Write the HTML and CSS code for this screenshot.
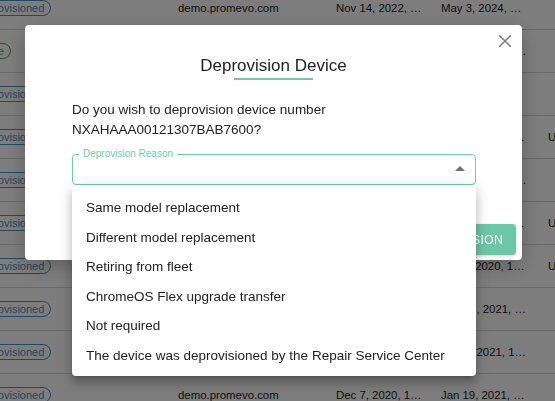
FILE: index.html
```html
<!DOCTYPE html>
<html>
<head>
<meta charset="utf-8">
<title>Deprovision Device</title>
<link rel="stylesheet" href="styles.css">
</head>
<body>
<div class="table">
  <div class="row"><div class="cell"><span class="chip blue">Deprovisioned</span></div><div class="cell">demo.promevo.com</div><div class="cell">Nov 14, 2022, …</div><div class="cell">May 3, 2024, …</div><div class="cell"></div></div>
  <div class="row"><div class="cell"><span class="chip green">Active</span></div><div class="cell">demo.promevo.com</div><div class="cell">Nov 14, 2022, …</div><div class="cell">Nov 21, 2024, …</div><div class="cell"></div></div>
  <div class="row"><div class="cell"><span class="chip blue">Deprovisioned</span></div><div class="cell">demo.promevo.com</div><div class="cell">Oct 3, 2022, 1…</div><div class="cell">Apr 11, 2024, …</div><div class="cell"></div></div>
  <div class="row"><div class="cell"><span class="chip blue">Deprovisioned</span></div><div class="cell">demo.promevo.com</div><div class="cell">Sep 8, 2021, 1…</div><div class="cell">Jan 5, 2023, 1…</div><div class="cell">Unassigned</div></div>
  <div class="row"><div class="cell"><span class="chip blue">Deprovisioned</span></div><div class="cell">demo.promevo.com</div><div class="cell">Aug 2, 2021, 1…</div><div class="cell">Dec 14, 2022, …</div><div class="cell"></div></div>
  <div class="row"><div class="cell"><span class="chip blue">Deprovisioned</span></div><div class="cell">demo.promevo.com</div><div class="cell">Jul 9, 2021, 1…</div><div class="cell">Jun 1, 2022, 1…</div><div class="cell">Unassigned</div></div>
  <div class="row"><div class="cell"><span class="chip blue">Deprovisioned</span></div><div class="cell">demo.promevo.com</div><div class="cell">Jan 6, 2020, 1…</div><div class="cell">Jun 2, 2020, 1…</div><div class="cell">Unassigned</div></div>
  <div class="row"><div class="cell"><span class="chip blue">Deprovisioned</span></div><div class="cell">demo.promevo.com</div><div class="cell">Feb 3, 2020, 1…</div><div class="cell">Mar 15, 2021, …</div><div class="cell"></div></div>
  <div class="row"><div class="cell"><span class="chip blue">Deprovisioned</span></div><div class="cell">demo.promevo.com</div><div class="cell">Nov 9, 2020, 1…</div><div class="cell">Feb 4, 2021, 1…</div><div class="cell"></div></div>
  <div class="row"><div class="cell"><span class="chip blue">Deprovisioned</span></div><div class="cell">demo.promevo.com</div><div class="cell">Dec 7, 2020, 1…</div><div class="cell">Jan 19, 2021, …</div><div class="cell"></div></div>
</div>

<div class="backdrop">
  <div class="dialog">
    <button class="close" aria-label="Close">
      <svg width="14" height="14" viewBox="0 0 14 14"><path d="M1.2 1.2 L12.8 12.8 M12.8 1.2 L1.2 12.8" stroke="#7a7a7a" stroke-width="1.5" fill="none"/></svg>
    </button>
    <div class="head">
      <h2 class="title">Deprovision Device</h2>
      <div class="underline"></div>
    </div>
    <div class="content">
      <p class="msg">Do you wish to deprovision device number<br>NXAHAAA00121307BAB7600?</p>
      <div class="field">
        <span class="label">Deprovision Reason</span>
        <svg class="arrow" width="10" height="5" viewBox="0 0 10 5"><path d="M0 5 L5 0 L10 5 Z" fill="#707070"/></svg>
      </div>
    </div>
    <div class="actions">
      <button class="primary">Deprovision</button>
    </div>
  </div>
  <ul class="menu">
    <li>Same model replacement</li>
    <li>Different model replacement</li>
    <li>Retiring from fleet</li>
    <li>ChromeOS Flex upgrade transfer</li>
    <li>Not required</li>
    <li>The device was deprovisioned by the Repair Service Center</li>
  </ul>
</div>
</body>
</html>
```

FILE: styles.css
```css
* { box-sizing: border-box; }

html, body {
  margin: 0;
  padding: 0;
  width: 555px;
  height: 401px;
  overflow: hidden;
  background: #fff;
  font-family: "Liberation Sans", Arial, Helvetica, sans-serif;
  color: #222;
}

.table {
  margin-top: -13px;
  margin-left: -33px;
}

.row {
  display: grid;
  grid-template-columns: 211px 158px 105px 107px 120px;
  height: 43px;
  border-bottom: 1px solid #d9d9d9;
  align-items: center;
  font-size: 11.4px;
  color: #1c1c1c;
  white-space: nowrap;
}

.cell { overflow: hidden; }

.chip {
  display: inline-flex;
  align-items: center;
  height: 16px;
  padding: 0 6px;
  border-radius: 8px;
  border: 1px solid;
  font-size: 11px;
}
.chip.blue { color: #4a93c4; border-color: #4a93c4; }
.chip.green { color: #5aa864; border-color: #5aa864; }

.backdrop {
  position: fixed;
  inset: 0;
  background: rgba(0, 0, 0, 0.51);
  padding: 25px 0 0 25px;
}

.dialog {
  position: relative;
  width: 497px;
  height: 235px;
  background: #fff;
  border-radius: 4px;
  box-shadow: 0 6px 20px rgba(0, 0, 0, 0.25);
  display: flex;
  flex-direction: column;
}

.close {
  position: absolute;
  top: 9px;
  right: 10px;
  width: 14px;
  height: 14px;
  padding: 0;
  border: 0;
  background: none;
  display: flex;
}

.head {
  padding-top: 28px;
  display: flex;
  flex-direction: column;
  align-items: center;
}

.title {
  margin: 0;
  font-size: 17px;
  font-weight: 400;
  line-height: 25px;
  color: #222;
}

.underline {
  width: 79px;
  height: 2px;
  background: #6fcbab;
}

.content {
  padding: 20px 46px 0 47px;
}

.msg {
  margin: 0;
  font-size: 13.5px;
  line-height: 20px;
  color: #222;
}

.field {
  position: relative;
  margin-top: 14px;
  height: 31px;
  border: 1.6px solid #6fcbab;
  border-radius: 4px;
}

.label {
  position: absolute;
  top: -7px;
  left: 6px;
  padding: 0 4px;
  background: #fff;
  font-size: 10px;
  line-height: 12px;
  color: #6fcbab;
}

.arrow {
  position: absolute;
  right: 10px;
  top: 11px;
}

.actions {
  margin-top: auto;
  display: flex;
  justify-content: flex-end;
  padding: 0 6px 5px 0;
}

.primary {
  height: 31px;
  padding: 0 13px;
  border: 0;
  border-radius: 4px;
  background: #6ec6a8;
  color: #fff;
  font-family: inherit;
  font-size: 12px;
  letter-spacing: 0.4px;
  text-transform: uppercase;
  box-shadow: 0 1px 3px rgba(0, 0, 0, 0.18);
}

.menu {
  position: absolute;
  left: 72px;
  top: 185px;
  width: 404px;
  margin: 0;
  padding: 8px 0 6px;
  list-style: none;
  background: #fff;
  border-radius: 4px;
  box-shadow: 0 5px 5px -3px rgba(0,0,0,.2), 0 8px 10px 1px rgba(0,0,0,.14), 0 3px 14px 2px rgba(0,0,0,.12);
}

.menu li {
  height: 29.5px;
  display: flex;
  align-items: center;
  padding-left: 14px;
  font-size: 13.5px;
  color: #222;
}
```
